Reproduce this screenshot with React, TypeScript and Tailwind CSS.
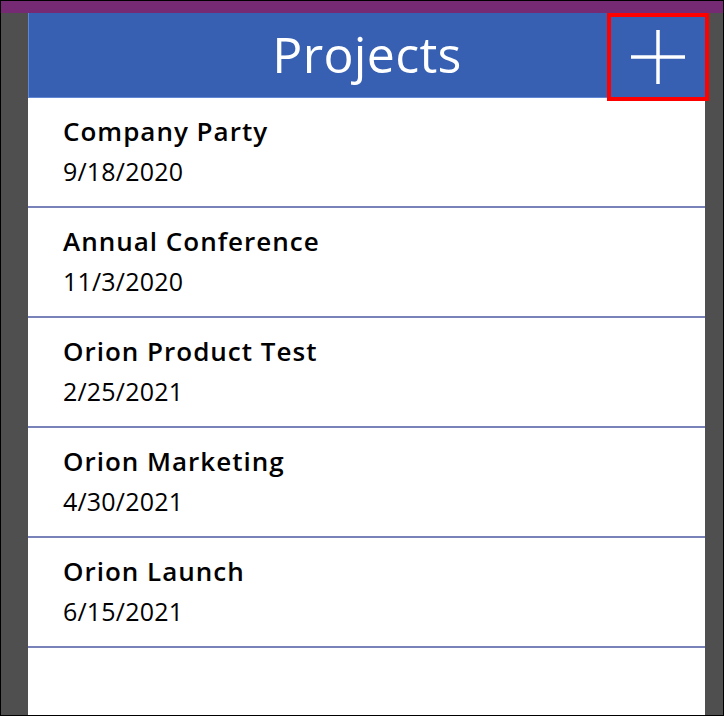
import React from "react";

const items = [
  { title: "Company Party", date: "9/18/2020" },
  { title: "Annual Conference", date: "11/3/2020" },
  { title: "Orion Product Test", date: "2/25/2021" },
  { title: "Orion Marketing", date: "4/30/2021" },
  { title: "Orion Launch", date: "6/15/2021" },
];

export default function App() {
  return (
    <div
      className="w-[724px] h-[716px] border border-black bg-[#4f4f4f] flex flex-col overflow-hidden"
      style={{ fontFamily: '"Open Sans", "Noto Sans", sans-serif' }}
    >
      <div className="h-[12px] bg-[#762a74] shrink-0" />
      <div className="flex flex-1 min-h-0">
        <div className="w-[27px] shrink-0 bg-[#4f4f4f]" />
        <div className="w-[677px] shrink-0 bg-white flex flex-col relative">
          <div className="h-[85px] shrink-0 bg-[#375fb2] border-l border-b border-[#5f87d4] flex items-center justify-center">
            <span className="text-white text-[50px] leading-none -mt-[2px] tracking-[0.3px]">Projects</span>
          </div>
          {items.map((it) => (
            <div
              key={it.title}
              className="h-[110px] shrink-0 border-b-2 border-[#7a82ba] pl-[35px] pt-[16px]"
            >
              <div className="text-[26px] font-semibold text-black leading-[35px] tracking-[1px]">{it.title}</div>
              <div className="text-[25px] text-black leading-[34px] mt-[5px] tracking-[0.2px]">{it.date}</div>
            </div>
          ))}
          <div className="absolute left-[579px] top-0 w-[102px] h-[88px] border-[4px] border-[#ff0000] flex items-center justify-center">
            <svg width="60" height="60" viewBox="0 0 60 60">
              <path d="M30 3 V57 M3 30 H57" stroke="white" strokeWidth="3.5" fill="none" />
            </svg>
          </div>
        </div>
        <div className="flex-1 bg-[#4f4f4f]" />
      </div>
    </div>
  );
}
